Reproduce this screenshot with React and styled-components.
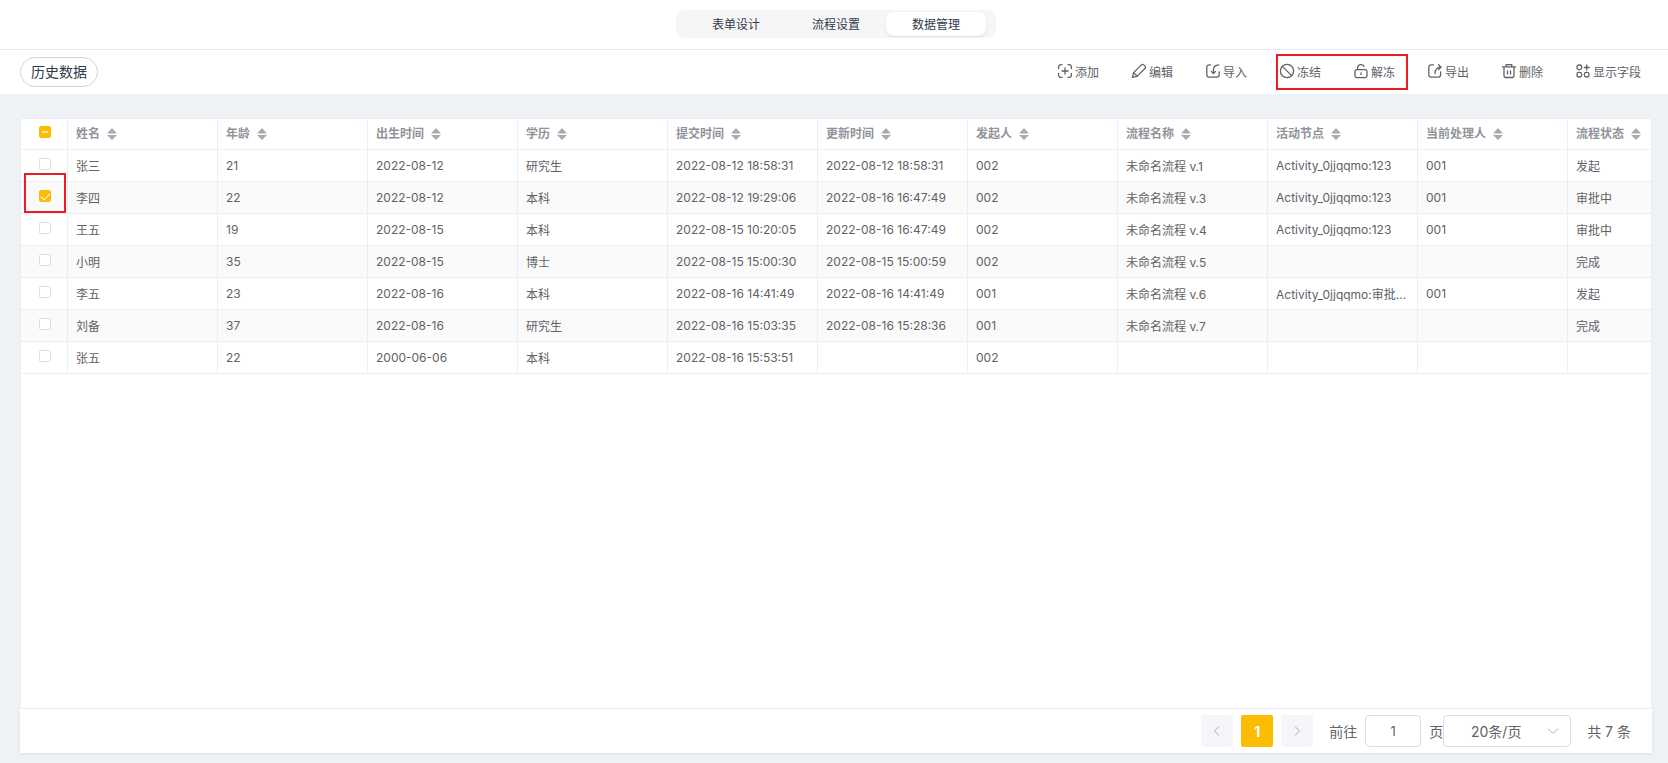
import React, { useState, useRef, useEffect } from 'react'
import styled, { createGlobalStyle, css } from 'styled-components'

const tabs = ['表单设计', '流程设置', '数据管理']

const columns = [
    '姓名', '年龄', '出生时间', '学历', '提交时间', '更新时间',
    '发起人', '流程名称', '活动节点', '当前处理人', '流程状态',
]

const rows = [
    ['张三', '21', '2022-08-12', '研究生', '2022-08-12 18:58:31', '2022-08-12 18:58:31', '002', '未命名流程 v.1', 'Activity_0jjqqmo:123', '001', '发起'],
    ['李四', '22', '2022-08-12', '本科', '2022-08-12 19:29:06', '2022-08-16 16:47:49', '002', '未命名流程 v.3', 'Activity_0jjqqmo:123', '001', '审批中'],
    ['王五', '19', '2022-08-15', '本科', '2022-08-15 10:20:05', '2022-08-16 16:47:49', '002', '未命名流程 v.4', 'Activity_0jjqqmo:123', '001', '审批中'],
    ['小明', '35', '2022-08-15', '博士', '2022-08-15 15:00:30', '2022-08-15 15:00:59', '002', '未命名流程 v.5', '', '', '完成'],
    ['李五', '23', '2022-08-16', '本科', '2022-08-16 14:41:49', '2022-08-16 14:41:49', '001', '未命名流程 v.6', 'Activity_0jjqqmo:审批节点', '001', '发起'],
    ['刘备', '37', '2022-08-16', '研究生', '2022-08-16 15:03:35', '2022-08-16 15:28:36', '001', '未命名流程 v.7', '', '', '完成'],
    ['张五', '22', '2000-06-06', '本科', '2022-08-16 15:53:51', '', '002', '', '', '', ''],
]

const Icon = ({ children }) => (
    <ToolIcon viewBox="0 0 16 16" aria-hidden="true">{children}</ToolIcon>
)

const AddIcon = () => (
    <Icon>
        <path d="M5 1.600H4A2.400 2.400 0 0 0 1.600 4v1.600M11 1.600h1A2.400 2.400 0 0 1 14.400 4v1.600M5 14.400H4A2.400 2.400 0 0 1 1.600 12v-1.600M11 14.400h1a2.400 2.400 0 0 0 2.400-2.400v-1.600" />
        <path d="M8 5v6M5 8h6" />
    </Icon>
)
const EditIcon = () => (
    <Icon>
        <path d="M1.400 14.400l1.200-4.800 7.600-7.500a2 2 0 0 1 2.800 0l.8.8a2 2 0 0 1 0 2.800L6.200 13.100z" />
        <path d="M2.600 9.600l3.600 3.500" />
    </Icon>
)
const ImportIcon = () => (
    <Icon>
        <path d="M5.500 1.800H4.200A2.400 2.400 0 0 0 1.800 4.200v7.600A2.400 2.400 0 0 0 4.200 14.200h7.600a2.400 2.400 0 0 0 2.400-2.400V9" />
        <path d="M13.800 1.800C10 2 8.400 4 8.400 7v3.400M6.200 8.400l2.200 2.200 2.200-2.200" />
    </Icon>
)
const FreezeIcon = () => (
    <Icon>
        <circle cx="8" cy="8" r="6.600" />
        <path d="M3.300 3.400l9.400 9.200" />
    </Icon>
)
const UnlockIcon = () => (
    <Icon>
        <rect x="2" y="6.600" width="12" height="8" rx="1.800" />
        <path d="M4.600 6.600V4.800A3.400 3.400 0 0 1 11 3.400M8 10v1.600" />
    </Icon>
)
const ExportIcon = () => (
    <Icon>
        <path d="M6.500 1.800H4.200A2.400 2.400 0 0 0 1.800 4.200v7.600A2.400 2.400 0 0 0 4.200 14.200h7a2.400 2.400 0 0 0 2.400-2.400V9" />
        <path d="M8 10.500c0-4.100 1.600-6.100 6-6.300M11.600 1.800L14 4.200l-2.400 2.400" />
    </Icon>
)
const DeleteIcon = () => (
    <Icon>
        <path d="M1.400 3.800h13.200M5.200 3.800V1.600h5.600v2.200M3 3.800v8.800a1.900 1.900 0 0 0 1.900 1.900h6.200a1.900 1.900 0 0 0 1.900-1.900V3.800M6.500 8v3M9.500 8v3" />
    </Icon>
)
const FieldsIcon = () => (
    <Icon>
        <rect x="2" y="2" width="4.600" height="4.600" rx="1.800" />
        <rect x="2" y="9.400" width="4.600" height="4.600" rx="1.800" />
        <rect x="9.400" y="9.400" width="4.600" height="4.600" rx="1.800" />
        <path d="M11.700 2v5M9.200 4.500h5" />
    </Icon>
)

const Tool = ({ icon, label }) => (
    <ToolButton type="button">{icon}{label}</ToolButton>
)

export default function App() {
    const [active, setActive] = useState(2)
    const [selected, setSelected] = useState([1])
    const [page, setPage] = useState('1')
    const allRef = useRef(null)
    const all = selected.length === rows.length

    useEffect(() => {
        allRef.current.indeterminate = selected.length > 0 && !all
    }, [selected, all])

    const toggle = (i) => {
        setSelected(selected.includes(i) ? selected.filter((n) => n !== i) : [...selected, i])
    }

    return (
        <Wrapper>
            <GlobalStyle />
            <Header>
                <TabBar>
                    {tabs.map((tab, i) => (
                        <Tab key={tab} type="button" $active={i === active} onClick={() => setActive(i)}>{tab}</Tab>
                    ))}
                </TabBar>
            </Header>
            <Toolbar>
                <HistoryButton type="button">历史数据</HistoryButton>
                <Tools>
                    <Tool icon={<AddIcon />} label="添加" />
                    <Tool icon={<EditIcon />} label="编辑" />
                    <Tool icon={<ImportIcon />} label="导入" />
                    <MarkedTools>
                        <Tool icon={<FreezeIcon />} label="冻结" />
                        <Tool icon={<UnlockIcon />} label="解冻" />
                    </MarkedTools>
                    <Tool icon={<ExportIcon />} label="导出" />
                    <Tool icon={<DeleteIcon />} label="删除" />
                    <Tool icon={<FieldsIcon />} label="显示字段" />
                </Tools>
            </Toolbar>
            <Content>
                <TablePanel>
                    <Table>
                        <colgroup>
                            <CheckCol />
                            {columns.slice(0, -1).map((c) => <DataCol key={c} />)}
                            <col />
                        </colgroup>
                        <thead>
                            <tr>
                                <CheckHead>
                                    <Checkbox
                                        type="checkbox"
                                        aria-label="全选"
                                        ref={allRef}
                                        checked={all}
                                        onChange={() => setSelected(all ? [] : rows.map((_, i) => i))}
                                    />
                                </CheckHead>
                                {columns.map((c) => (
                                    <HeadCell key={c}>
                                        <SortButton type="button">
                                            {c}
                                            <SortIcon viewBox="0 0 10 12" aria-hidden="true">
                                                <path d="M0 5.500L5 0l5 5.500zM0 7h10L5 12z" />
                                            </SortIcon>
                                        </SortButton>
                                    </HeadCell>
                                ))}
                            </tr>
                        </thead>
                        <tbody>
                            {rows.map((row, i) => (
                                <Row key={row[0]}>
                                    <CheckCell $marked={i === 1}>
                                        <Checkbox
                                            type="checkbox"
                                            aria-label={row[0]}
                                            checked={selected.includes(i)}
                                            onChange={() => toggle(i)}
                                        />
                                    </CheckCell>
                                    {row.map((cell, n) => <Cell key={columns[n]}>{cell}</Cell>)}
                                </Row>
                            ))}
                        </tbody>
                    </Table>
                </TablePanel>
                <Pagination>
                    <PageButton type="button" aria-label="上一页" disabled>
                        <Chevron viewBox="0 0 12 12"><path d="M8 1.500L3.500 6 8 10.500" /></Chevron>
                    </PageButton>
                    <PageButton type="button" $active>1</PageButton>
                    <PageButton type="button" aria-label="下一页" disabled>
                        <Chevron viewBox="0 0 12 12"><path d="M4 1.500L8.500 6 4 10.500" /></Chevron>
                    </PageButton>
                    <Jump>
                        前往
                        <PageInput value={page} onChange={(e) => setPage(e.target.value)} />
                        页
                    </Jump>
                    <SizeWrapper>
                        <SizeSelect aria-label="每页条数" defaultValue="20">
                            <option value="10">10条/页</option>
                            <option value="20">20条/页</option>
                            <option value="50">50条/页</option>
                        </SizeSelect>
                        <SelectArrow viewBox="0 0 12 12"><path d="M1 3.500l5 5 5-5" /></SelectArrow>
                    </SizeWrapper>
                    <Total>共 7 条</Total>
                </Pagination>
            </Content>
        </Wrapper>
    )
}

const GlobalStyle = createGlobalStyle`
    * {
        box-sizing: border-box;
    }
    body {
        margin: 0;
        background: #eef2f5;
    }
    body, button, input, select {
        font-family: Inter, "Noto Sans CJK SC", sans-serif;
        font-size: 12px;
        color: #606266;
    }
    button {
        padding: 0;
        border: none;
        background: none;
        white-space: nowrap;
        cursor: pointer;
    }
`;

const redBox = css`
    &::after {
        content: '';
        position: absolute;
        border: 2px solid #ed1c24;
        pointer-events: none;
    }
`;

const Wrapper = styled.div`
    display: flex;
    flex-direction: column;
    min-height: 100vh;
`;

const Header = styled.header`
    display: flex;
    justify-content: center;
    padding: 10px 0 11px 4px;
    background: #fff;
    border-bottom: 1px solid #e6e8eb;
`;

const TabBar = styled.nav`
    display: flex;
    padding: 2px 10px;
    border-radius: 8px;
    background: #f6f6f6;
`;

const Tab = styled.button`
    width: 100px;
    height: 24px;
    padding-bottom: 2px;
    border-radius: 8px;
    color: #303a4d;
    ${({ $active }) => $active && css`
        background: #fff;
        box-shadow: 0 1px 2px rgba(0, 0, 0, .1);
    `}
`;

const Toolbar = styled.div`
    display: flex;
    align-items: center;
    justify-content: space-between;
    height: 44px;
    padding: 0 27px 0 20px;
    background: #fff;
`;

const HistoryButton = styled.button`
    height: 30px;
    padding: 0 10px 2px;
    border: 1px solid #cdd3dc;
    border-radius: 15px;
    font-size: 14px;
    color: #303a4d;
`;

const Tools = styled.div`
    display: flex;
    gap: 32px;
    padding-bottom: 2px;
`;

const MarkedTools = styled.div`
    position: relative;
    display: flex;
    gap: 32px;
    ${redBox}
    &::after {
        inset: -9px -13px -11px -3px;
    }
`;

const ToolButton = styled.button`
    display: flex;
    align-items: center;
    gap: 2px;
    height: 16px;
`;

const ToolIcon = styled.svg`
    width: 16px;
    height: 16px;
    fill: none;
    stroke: #606266;
    stroke-width: 1.3;
    stroke-linecap: round;
    stroke-linejoin: round;
`;

const Content = styled.main`
    flex: 1;
    display: flex;
    flex-direction: column;
    padding: 24px 16px 10px 20px;
`;

const TablePanel = styled.section`
    flex: 1;
    overflow-x: auto;
    background: #fff;
    border: 1px solid #ebeef5;
`;

const Table = styled.table`
    width: 100%;
    min-width: 1620px;
    table-layout: fixed;
    border-collapse: separate;
    border-spacing: 0;
`;

const CheckCol = styled.col`
    width: 47px;
`;

const DataCol = styled.col`
    width: 150px;
`;

const cell = css`
    padding: 0 8px;
    border-right: 1px solid #ebeef5;
    border-bottom: 1px solid #ebeef5;
    text-align: left;
    white-space: nowrap;
    overflow: hidden;
    text-overflow: ellipsis;
    &:last-child {
        border-right: none;
    }
`;

const HeadCell = styled.th`
    ${cell}
    height: 31px;
    padding-bottom: 1px;
`;

const CheckHead = styled(HeadCell)`
    padding: 0 7px 0 9px;
`;

const Cell = styled.td`
    ${cell}
    height: 32px;
`;

const CheckCell = styled(Cell)`
    position: relative;
    padding: 0 7px 0 9px;
    overflow: visible;
    ${({ $marked }) => $marked && redBox}
    &::after {
        inset: -9px 1px 0 3px;
    }
`;

const Row = styled.tr`
    &:nth-child(even) {
        background: #fafafa;
    }
`;

const SortButton = styled.button`
    display: flex;
    align-items: center;
    gap: 7px;
    font-weight: 700;
    line-height: 16px;
    color: #909399;
`;

const SortIcon = styled.svg`
    width: 10px;
    height: 12px;
    fill: #a8abb2;
`;

const Checkbox = styled.input`
    appearance: none;
    position: relative;
    display: block;
    width: 12px;
    height: 12px;
    margin: 0 auto 4px;
    border: 1px solid #dcdfe6;
    border-radius: 2px;
    background: #fff;
    &:checked, &:indeterminate {
        border-color: #fcbc02;
        background: #fcbc02;
    }
    &:checked::after {
        content: '';
        position: absolute;
        left: 3px;
        top: 0;
        width: 4px;
        height: 8px;
        border: solid #fff;
        border-width: 0 1px 1px 0;
        transform: rotate(45deg);
    }
    &:indeterminate::after {
        content: '';
        position: absolute;
        left: 2px;
        top: 4px;
        width: 6px;
        height: 2px;
        background: #fee49a;
    }
`;

const Pagination = styled.footer`
    display: flex;
    align-items: center;
    justify-content: flex-end;
    height: 44px;
    padding-right: 21px;
    background: #fff;
    box-shadow: 0 1px 3px rgba(0, 0, 0, .08);
    font-size: 14px;
`;

const PageButton = styled.button`
    display: flex;
    align-items: center;
    justify-content: center;
    width: 32px;
    height: 32px;
    margin-right: 8px;
    border-radius: 2px;
    background: ${({ $active }) => ($active ? '#fcbc02' : '#f4f6fa')};
    color: #fff;
    font-size: 14px;
    font-weight: 700;
`;

const Chevron = styled.svg`
    width: 12px;
    height: 12px;
    fill: none;
    stroke: #a8abb2;
`;

const Jump = styled.label`
    display: flex;
    align-items: center;
    gap: 8px;
    margin-left: 8px;
`;

const field = css`
    height: 32px;
    border: 1px solid #dcdfe6;
    border-radius: 4px;
    background: #fff;
    font-size: 14px;
    text-align: center;
    outline: none;
`;

const PageInput = styled.input`
    ${field}
    width: 56px;
    font-size: 13px;
`;

const SizeWrapper = styled.div`
    position: relative;
    display: flex;
`;

const SizeSelect = styled.select`
    ${field}
    appearance: none;
    width: 128px;
    padding: 0 30px 0 8px;
    text-align-last: center;
`;

const SelectArrow = styled(Chevron)`
    position: absolute;
    right: 12px;
    top: 10px;
    pointer-events: none;
`;

const Total = styled.span`
    margin-left: 16px;
`;
